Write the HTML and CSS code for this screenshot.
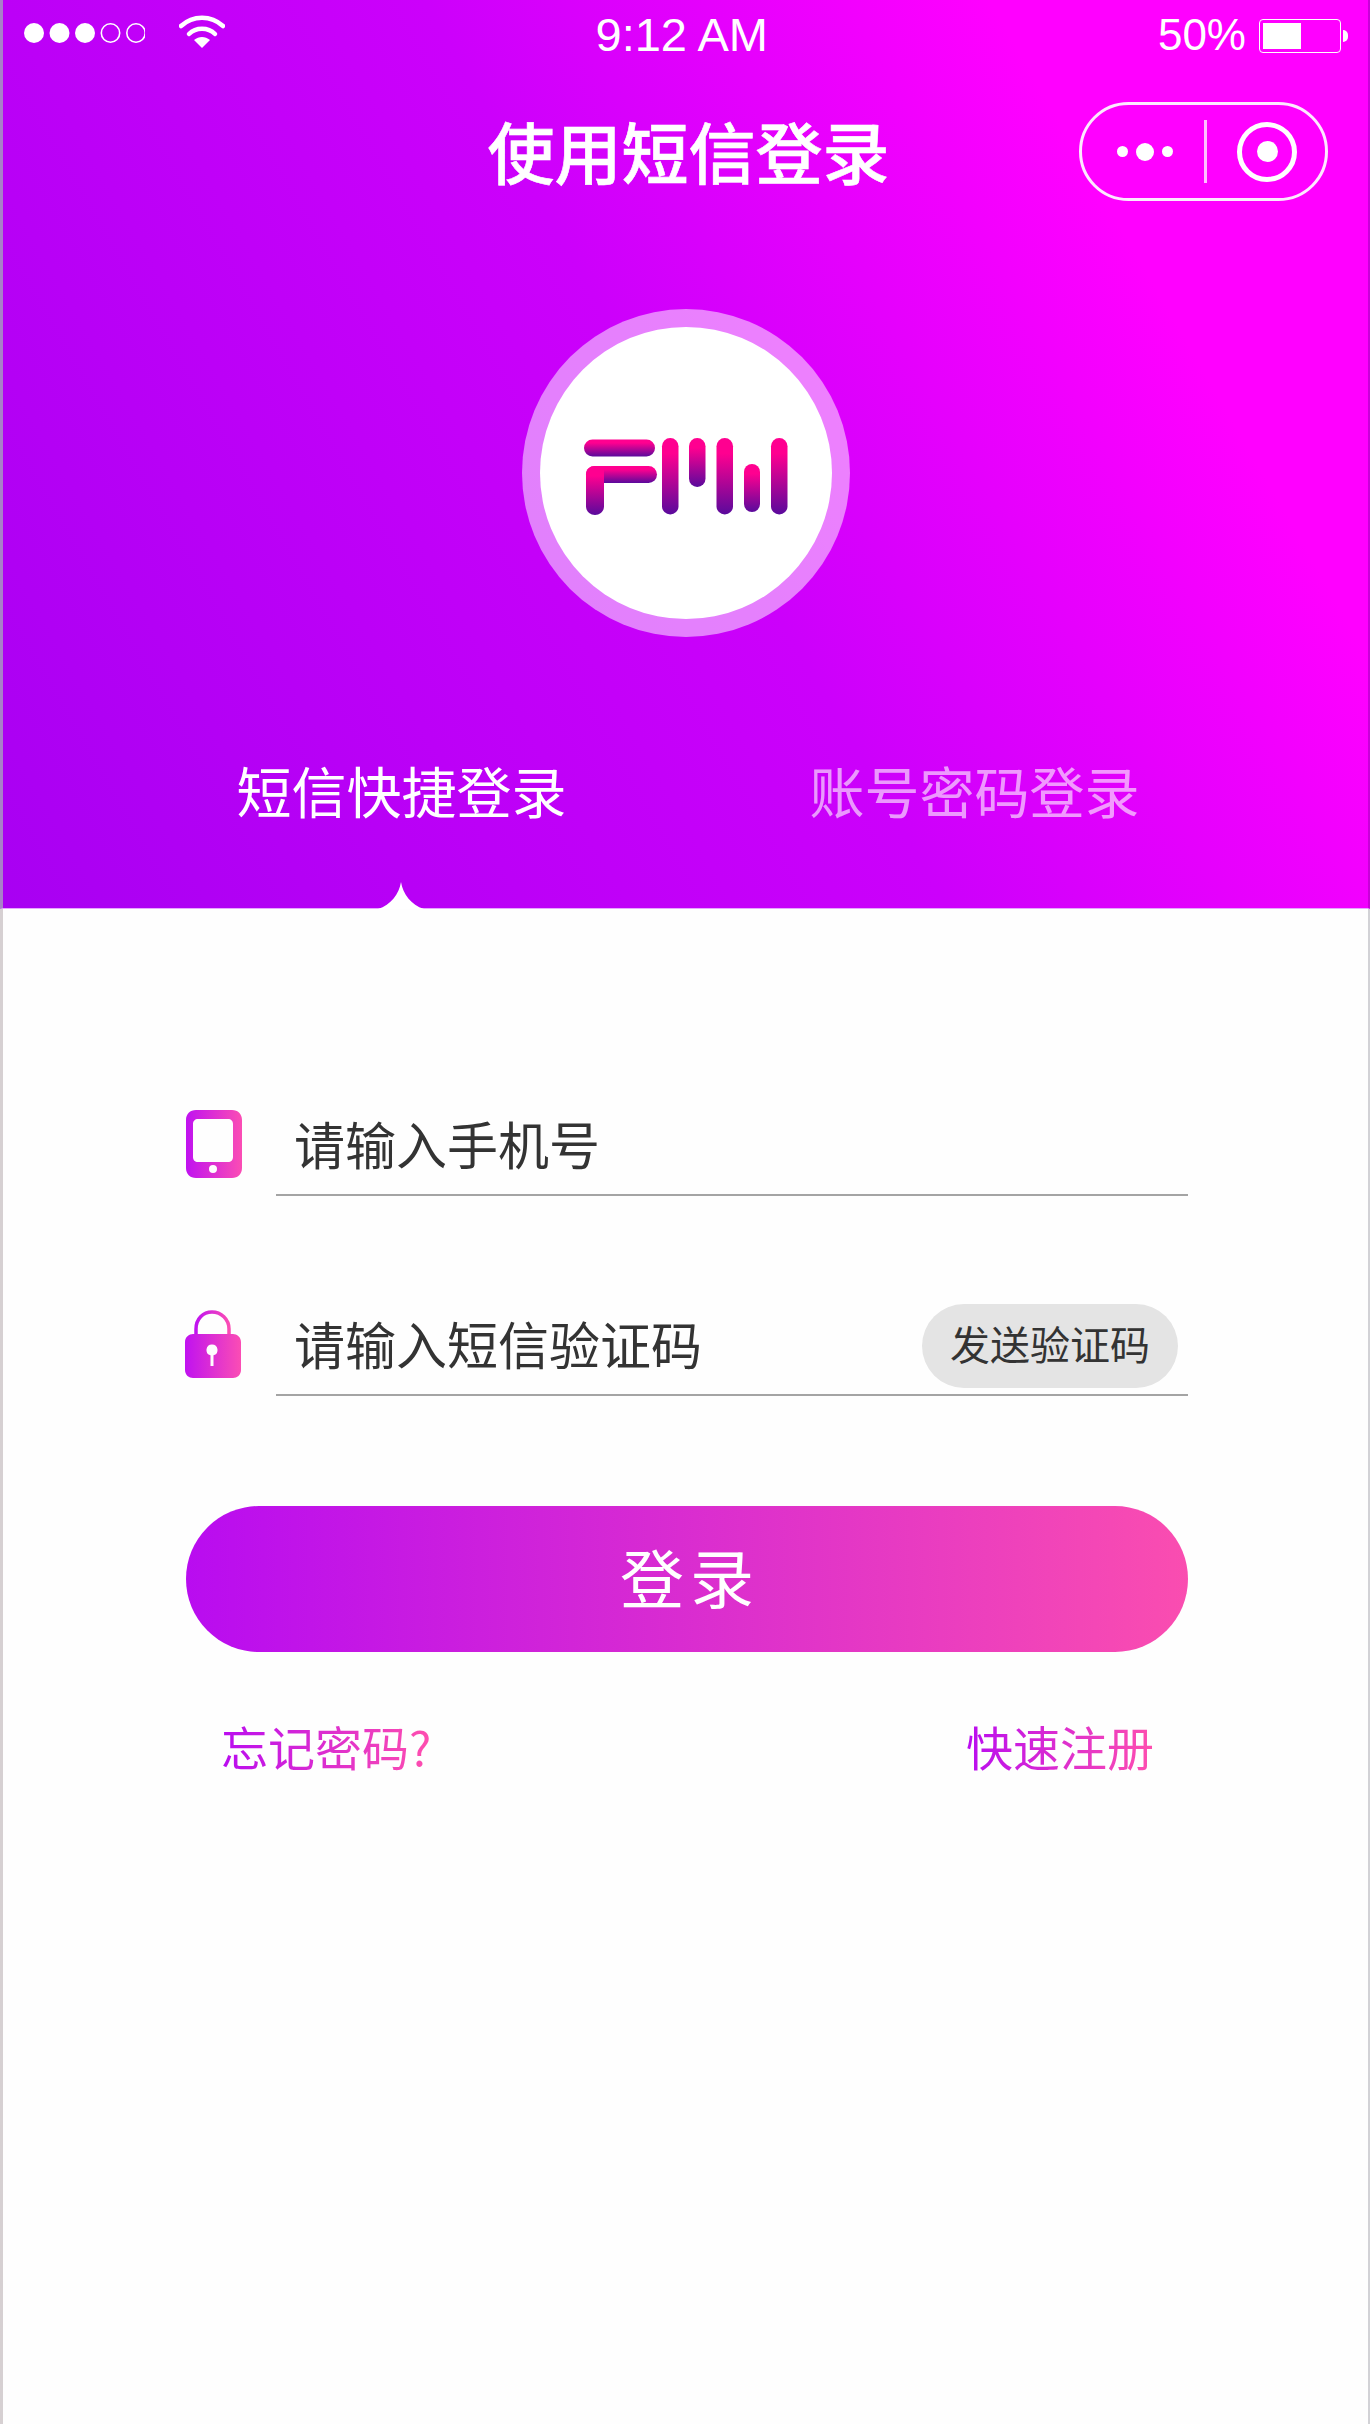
FILE: index.html
```html
<!DOCTYPE html>
<html lang="zh-CN">
<head>
<meta charset="utf-8">
<title>使用短信登录</title>
<link rel="stylesheet" href="styles.css">
</head>
<body>
<div class="page">
  <div class="header">
    <div class="status_bar">
      <div class="status_left">
        <svg class="signal" width="122" height="24" viewBox="0 0 122 24">
          <circle cx="11" cy="12" r="10" fill="#fff"/>
          <circle cx="36.500" cy="12" r="10" fill="#fff"/>
          <circle cx="62" cy="12" r="10" fill="#fff"/>
          <circle cx="87.500" cy="12" r="9.200" fill="none" stroke="#fff" stroke-width="1.600"/>
          <circle cx="113" cy="12" r="9.200" fill="none" stroke="#fff" stroke-width="1.600"/>
        </svg>
        <svg class="wifi" width="46" height="34" viewBox="0 0 46 34">
          <path d="M2 11C14 0 32 0 44 11" fill="none" stroke="#fff" stroke-width="4.500" stroke-linecap="round"/>
          <path d="M10 19C17 12 29 12 36 19" fill="none" stroke="#fff" stroke-width="4.500" stroke-linecap="round"/>
          <path d="M15 25C20 21 26 21 31 25L23 33Z" fill="#fff"/>
        </svg>
      </div>
      <div class="status_time">9:12 AM</div>
      <div class="status_right">
        <span>50%</span>
        <div class="battery"><div class="battery_fill"></div></div>
        <div class="battery_nub"></div>
      </div>
    </div>

    <div class="nav_bar">
      <div></div>
      <div class="nav_title">使用短信登录</div>
      <div class="capsule">
        <div class="capsule_dots"><i></i><b></b><i></i></div>
        <div class="capsule_line"></div>
        <div class="capsule_target"><i></i></div>
      </div>
    </div>

    <div class="logo_ring">
      <div class="logo_circle">
        <svg class="logo_mark" width="204" height="78" viewBox="0 0 204 78">
          <defs>
            <linearGradient id="bar" x1="0" y1="0" x2="0" y2="1">
              <stop offset="0.2" stop-color="#ff0090"/>
              <stop offset="1" stop-color="#5a0a9c"/>
            </linearGradient>
          </defs>
          <rect x="0" y="1.500" width="71" height="17" rx="8.500" fill="url(#bar)"/>
          <rect x="2" y="28" width="71" height="17" rx="8.500" fill="url(#bar)"/>
          <path d="M2 36C2 31 6 28 11 28H20V68.500C20 73 16 77 11 77S2 73 2 68.500Z" fill="url(#bar)"/>
          <rect x="78" y="0" width="16.500" height="76.500" rx="8.200" fill="url(#bar)"/>
          <rect x="105" y="0" width="16.500" height="49" rx="8.200" fill="url(#bar)"/>
          <rect x="132.500" y="0" width="16.500" height="76.500" rx="8.200" fill="url(#bar)"/>
          <rect x="160" y="26" width="16" height="48" rx="8" fill="url(#bar)"/>
          <rect x="187" y="0" width="16.500" height="76.500" rx="8.200" fill="url(#bar)"/>
        </svg>
      </div>
    </div>

    <div class="tabs">
      <div class="tab">短信快捷登录</div>
      <div class="tab tab_off">账号密码登录</div>
    </div>

    <svg class="notch" width="46" height="27" viewBox="0 0 46 27">
      <path d="M23 0C25 12 33 23 46 27H0C13 23 21 12 23 0Z" fill="#fff"/>
    </svg>
  </div>

  <div class="form">
    <div class="field field_phone">
      <svg class="field_icon" width="56" height="68" viewBox="0 0 56 68">
        <defs>
          <linearGradient id="pink" x1="0" y1="0" x2="1" y2="0">
            <stop offset="0" stop-color="#c012f0"/>
            <stop offset="1" stop-color="#fb4db4"/>
          </linearGradient>
        </defs>
        <path fill="url(#pink)" fill-rule="evenodd" d="M10 0H46C52 0 56 4 56 10V58C56 64 52 68 46 68H10C4 68 0 64 0 58V10C0 4 4 0 10 0ZM12 9C9 9 7 11 7 14V47C7 50 9 52 12 52H42C45 52 47 50 47 47V14C47 11 45 9 42 9ZM27 55A4 4 0 1 0 27 63A4 4 0 1 0 27 55Z"/>
      </svg>
      <div class="field_box">
        <span class="field_text">请输入手机号</span>
      </div>
    </div>

    <div class="field field_code">
      <svg class="field_icon" width="56" height="68" viewBox="0 0 56 68">
        <path fill="none" stroke="url(#pink)" stroke-width="3.500" d="M11 36V19C11 9 18 2 27 2S44 9 44 19V36"/>
        <path fill="url(#pink)" fill-rule="evenodd" d="M8 24H48C52 24 56 27 56 32V60C56 65 52 68 48 68H8C4 68 0 65 0 60V32C0 27 4 24 8 24ZM27 34.500A5.500 5.500 0 0 0 25.500 45.300V56H28.500V45.300A5.500 5.500 0 0 0 27 34.500Z"/>
      </svg>
      <div class="field_box">
        <span class="field_text">请输入短信验证码</span>
        <div class="send_btn">发送验证码</div>
      </div>
    </div>

    <div class="login_btn">登录</div>

    <div class="links">
      <span class="link">忘记密码?</span>
      <span class="link">快速注册</span>
    </div>
  </div>
</div>
</body>
</html>
```

FILE: styles.css
```css
html, body
{
  margin:0;
  padding:0;
  background-color:#fff;
}
.page
{
  width:1370px;
  height:2424px;
  box-sizing:border-box;
  padding:0 0 0 3px;
  background-color:#fefefe;
  border-right:2px solid #d2d2d6;
  box-shadow:inset 3px 0 0 #d6d0d2;
  font-family:"Noto Sans CJK SC","Liberation Sans",sans-serif;
  color:#333;
}
.header
{
  position:relative;
  height:909px;
  box-sizing:border-box;
  margin:0 -2px 0 -3px;
  border-left:3px solid #a880c8;
  border-right:2px solid #c800d8;
  border-bottom:1px solid #e6a6ff;
  background:linear-gradient(60deg,#a800f2 0,#cc00fb 50%,#ff00ff 80%);
  color:#fff;
}
.status_bar
{
  display:grid;
  grid-template-columns:1fr auto 1fr;
  align-items:center;
  height:72px;
  padding-right:8px;
  font-family:"Liberation Sans",sans-serif;
  font-size:44px;
}
.status_left
{
  display:flex;
  align-items:flex-start;
  padding-left:20px;
}
.signal
{
  margin-top:-2px;
}
.wifi
{
  margin:-8px 0 0 34px;
}
.status_time
{
  width:172px;
  margin-top:-3px;
  font-size:47px;
  text-align:center;
  white-space:nowrap;
}
.status_right
{
  display:flex;
  align-items:center;
  justify-content:flex-end;
  padding-right:12px;
}
.status_right span
{
  margin-top:-2px;
}
.battery
{
  width:82px;
  height:34px;
  box-sizing:border-box;
  margin-left:13px;
  padding:3px;
  border:1.500px solid #fff;
  border-radius:4px;
}
.battery_fill
{
  width:38px;
  height:100%;
  background-color:#fff;
}
.battery_nub
{
  width:5px;
  height:12px;
  margin-left:2px;
  background-color:#fff;
  border-radius:0 6px 6px 0;
}
.nav_bar
{
  display:grid;
  grid-template-columns:1fr auto 1fr;
  align-items:center;
  height:160px;
  padding-left:6px;
}
.nav_title
{
  margin-top:-5px;
  font-size:67px;
  font-weight:500;
  line-height:80px;
  -webkit-text-stroke:0.6px #fff;
}
.capsule
{
  display:flex;
  align-items:center;
  justify-self:end;
  width:249px;
  height:99px;
  box-sizing:border-box;
  margin:-1px 40px 0 0;
  border:3px solid #fde9ff;
  border-radius:50px;
}
.capsule_dots
{
  display:flex;
  align-items:center;
  gap:8px;
  margin-left:35px;
}
.capsule_dots i
{
  width:11px;
  height:11px;
  background-color:#fff;
  border-radius:50%;
}
.capsule_dots b
{
  width:18px;
  height:18px;
  background-color:#fff;
  border-radius:50%;
}
.capsule_line
{
  width:3px;
  height:63px;
  margin-left:31px;
  background-color:rgba(255,255,255,0.75);
}
.capsule_target
{
  display:flex;
  align-items:center;
  justify-content:center;
  width:60px;
  height:60px;
  box-sizing:border-box;
  margin-left:30px;
  border:5px solid #fff;
  border-radius:50%;
}
.capsule_target i
{
  width:21px;
  height:21px;
  background-color:#fff;
  border-radius:50%;
}
.logo_ring
{
  width:328px;
  height:328px;
  box-sizing:border-box;
  margin:77px auto 0;
  padding:18px;
  background-color:rgba(255,255,255,0.5);
  border-radius:50%;
}
.logo_circle
{
  display:flex;
  align-items:center;
  justify-content:center;
  width:100%;
  height:100%;
  background-color:#fff;
  border-radius:50%;
}
.logo_mark
{
  margin-top:8px;
}
.tabs
{
  display:flex;
  justify-content:center;
  gap:243px;
  margin-top:102px;
  padding-left:5px;
  font-size:55px;
  line-height:100px;
}
.tab_off
{
  color:rgba(255,255,255,0.6);
}
.notch
{
  position:absolute;
  left:375px;
  bottom:-1px;
}
.form
{
  padding:201px 180px 0 183px;
}
.field
{
  display:flex;
  align-items:flex-start;
}
.field_phone
{
  height:86px;
}
.field_code
{
  height:86px;
  margin-top:114px;
}
.field_code .field_icon
{
  margin:0 35px 0 -1px;
}
.field_icon
{
  flex:none;
  margin-right:34px;
}
.field_box
{
  display:flex;
  flex:1;
  align-items:center;
  justify-content:space-between;
  height:86px;
  box-sizing:border-box;
  padding:0 10px 12px 18px;
  border-bottom:2px solid #a4a4a4;
}
.field_text
{
  margin-bottom:6px;
  font-size:51px;
}
.send_btn
{
  width:256px;
  height:84px;
  font-size:40px;
  line-height:78px;
  text-align:center;
  background-color:#e4e4e4;
  border-radius:42px;
}
.login_btn
{
  height:146px;
  margin-top:110px;
  font-size:64px;
  line-height:139px;
  letter-spacing:6px;
  text-indent:6px;
  text-align:center;
  color:#fff;
  background:linear-gradient(to right,#b90cf0,#fa4db0);
  border-radius:73px;
}
.links
{
  display:flex;
  justify-content:space-between;
  margin-top:59px;
  padding:0 34px 0 35px;
}
.link
{
  font-size:47px;
  line-height:70px;
  color:transparent;
  background:linear-gradient(to right,#b90cf0,#ff4fae);
  -webkit-background-clip:text;
  background-clip:text;
}
```
